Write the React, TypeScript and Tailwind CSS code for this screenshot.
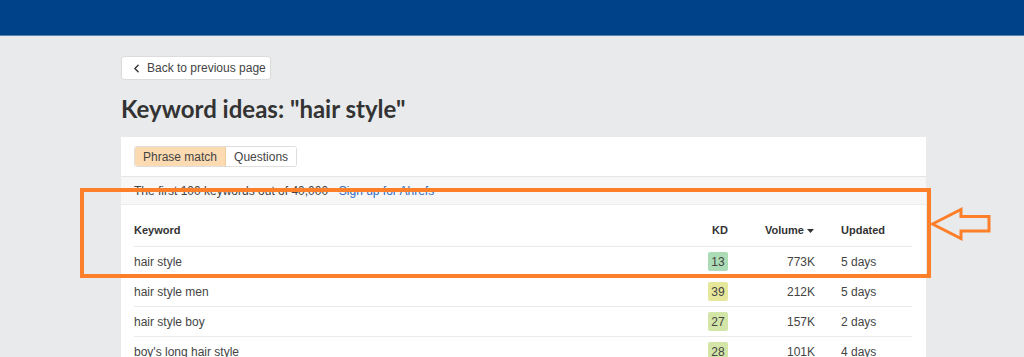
import { ChevronLeft } from "lucide-react";

type Row = {
  keyword: string;
  kd: number;
  volume: string;
  updated: string;
};

const rows: Row[] = [
  { keyword: "hair style", kd: 13, volume: "773K", updated: "5 days" },
  { keyword: "hair style men", kd: 39, volume: "212K", updated: "5 days" },
  { keyword: "hair style boy", kd: 27, volume: "157K", updated: "2 days" },
  { keyword: "boy's long hair style", kd: 28, volume: "101K", updated: "4 days" },
];

function kdColor(kd: number) {
  if (kd < 20) return "bg-[#abdcb5]";
  if (kd < 30) return "bg-[#d3e5a7]";
  return "bg-[#e7e79b]";
}

export default function App() {
  return (
    <div className="relative min-h-screen bg-[#e9eaec] font-['Liberation_Sans',Arial,sans-serif] text-[12px] text-[#444]">
      <div className="h-[36px] bg-[#00428a] border-b border-[#5a84b6]" />

      <div className="ml-[121px] w-[805px] pt-[20px]">
        <button
          type="button"
          className="flex items-center h-[24px] w-[150px] pl-[8px] bg-white border border-[#dcdcdc] rounded-[3px] text-[12px] text-[#444]"
        >
          <ChevronLeft size={13} strokeWidth={2.6} className="text-[#333]" />
          <span className="ml-[4px]">Back to previous page</span>
        </button>

        <h1 className="mt-[14px] mb-[14px] font-['Lato',sans-serif] font-bold text-[24px] leading-[29px] text-[#333]">
          Keyword ideas: "hair style"
        </h1>

        <div className="bg-white">
          <div className="px-[13px] py-[9px] border-b border-[#e6e6e6]">
            <div className="flex h-[21px] w-fit rounded-[3px] border border-[#dedede] overflow-hidden">
              <div className="flex items-center px-[8px] bg-[#fcdbb2] border-r border-[#f3cb98]">Phrase match</div>
              <div className="flex items-center px-[8px] bg-white">Questions</div>
            </div>
          </div>

          <div className="flex items-center h-[28px] px-[13px] bg-[#f7f7f7] border-b border-[#ececec]">
            <span>The first 100 keywords out of 40,000</span>
            <span className="mx-[2px]">–</span>
            <span className="text-[#2d6bc2]">Sign up for Ahrefs</span>
          </div>

          <div className="px-[13px] pr-[14px]">
            <div className="flex items-center pt-[18px] pb-[8px] leading-[15px] text-[11px] font-bold text-[#333] border-b border-[#ebebeb]">
              <div className="flex-1">Keyword</div>
              <div className="text-right">KD</div>
              <div className="w-[87px] flex items-center justify-end gap-[3px] pr-[1px]">
                Volume
                <svg width="7" height="4" viewBox="0 0 7 4">
                  <path d="M0 0h7L3.5 4z" fill="#333" />
                </svg>
              </div>
              <div className="w-[97px] pl-[26px]">Updated</div>
            </div>

            {rows.map((r) => (
              <div key={r.keyword} className="flex items-center h-[30px] border-b border-[#ebebeb]">
                <div className="flex-1">{r.keyword}</div>
                <div className={`flex items-center justify-center w-[20px] h-[19px] rounded-[2px] ${kdColor(r.kd)}`}>
                  {r.kd}
                </div>
                <div className="w-[87px] text-right">{r.volume}</div>
                <div className="w-[97px] pl-[26px]">{r.updated}</div>
              </div>
            ))}
          </div>
        </div>
      </div>

      {/* annotation overlay */}
      <svg className="absolute left-0 top-0 pointer-events-none" width="1024" height="357" viewBox="0 0 1024 357">
        <rect x="82" y="190" width="847" height="86" fill="none" stroke="#fd7f29" strokeWidth="4" />
        <path
          d="M932.5 224 L961 209.5 V216.5 H989 V231 H961 V238.5 Z"
          fill="none"
          stroke="#fd7f29"
          strokeWidth="3"
          strokeLinejoin="miter"
        />
      </svg>
    </div>
  );
}
